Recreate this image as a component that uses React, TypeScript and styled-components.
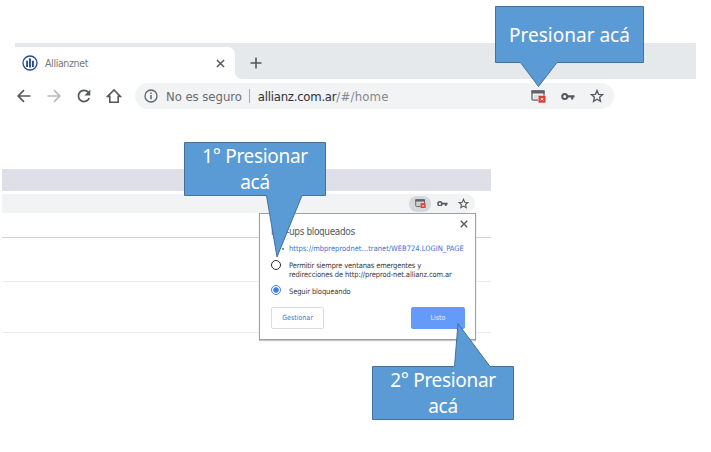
import React from "react";
import styled, { createGlobalStyle } from "styled-components";

const GlobalStyle = createGlobalStyle`
  *, *::before, *::after { box-sizing: border-box; }
  body { margin: 0; background: #fff; }
`;

const uiFont = `"DejaVu Sans Condensed", "DejaVu Sans", sans-serif`;

const Page = styled.main`
  position: relative;
  width: 711px;
  height: 452px;
  overflow: hidden;
  background: #fff;
  font-family: ${uiFont};
  font-stretch: condensed;
`;

const Browser = styled.section`
  width: 681px;
  margin-left: 15px;
  padding-top: 43px;
`;

const TabStrip = styled.div`
  display: flex;
  align-items: flex-end;
  height: 36px;
  background: #e5e9ec;
`;

const Tab = styled.div`
  display: flex;
  align-items: center;
  width: 220px;
  height: 32px;
  padding: 0 10px 0 7px;
  background: #fff;
  border-radius: 0 7px 0 0;
`;

const NewTab = styled.div`
  display: flex;
  align-items: center;
  height: 32px;
  padding-left: 15px;
  border-bottom-left-radius: 7px;
  background: #e5e9ec;
`;

const NewTabBack = styled.div`
  background: #fff;
`;

const Label = styled.span<{ $size: number; $color: string; $spacing?: number }>`
  font-size: ${(p) => p.$size}px;
  color: ${(p) => p.$color};
  letter-spacing: ${(p) => p.$spacing ?? 0}px;
  white-space: nowrap;
`;

const TabTitle = styled(Label)`
  flex: 1;
  margin-left: 7px;
`;

const Toolbar = styled.div`
  display: flex;
  align-items: center;
  height: 34px;
`;

const Nav = styled.div`
  display: flex;
  gap: 14px;
  width: 120px;
  padding-left: 1px;
`;

const AddressBar = styled.div`
  display: flex;
  align-items: center;
  width: 479px;
  height: 26px;
  padding: 0 10px 0 9px;
  border-radius: 13px;
  background: #f1f3f4;
`;

const SecurityLabel = styled(Label)`
  margin-left: 8px;
`;

const Divider = styled.span`
  width: 1px;
  height: 14px;
  margin: 0 8px 0 7px;
  background: #a5a8ab;
`;

const Url = styled.div`
  flex: 1;
  line-height: 18px;
`;

const Actions = styled.div<{ $gap: number }>`
  display: flex;
  align-items: center;
  gap: ${(p) => p.$gap}px;
`;

const SecondWindow = styled.section`
  width: 489px;
  margin: 56px 0 0 2px;
`;

const TitleBand = styled.div`
  height: 22px;
  background: #dfe0e7;
`;

const SmallBar = styled.div`
  display: flex;
  align-items: center;
  justify-content: flex-end;
  width: 473px;
  height: 19px;
  margin-top: 3px;
  padding-right: 6px;
  border-radius: 0 10px 10px 0;
  background: #f1f3f4;
`;

const ActiveBadge = styled.span`
  display: flex;
  align-items: center;
  justify-content: center;
  width: 22px;
  height: 16px;
  margin-right: -4px;
  border-radius: 8px;
  background: #d5d8da;
`;

const Row = styled.div<{ $height: number; $line: string }>`
  height: ${(p) => p.$height}px;
  border-bottom: 1px solid ${(p) => p.$line};
`;

const Dialog = styled.section`
  position: absolute;
  left: 259px;
  top: 213px;
  display: flex;
  flex-direction: column;
  width: 217px;
  height: 127px;
  padding: 7px 10px 10px 11px;
  border: 1px solid #a0a0a0;
  background: #fff;
  box-shadow: 0 1px 1px #c4c4c4;
`;

const DialogHead = styled.header`
  display: flex;
  justify-content: space-between;
  height: 21px;
  line-height: 21px;
`;

const CloseSlot = styled.span`
  display: flex;
  margin: -1px -3px 0 0;
`;

const LinkRow = styled.div`
  display: flex;
  align-items: center;
  gap: 5px;
  height: 13px;
  padding-left: 11px;
`;

const Bullet = styled.i`
  width: 2px;
  height: 2px;
  border-radius: 50%;
  background: #3974d0;
`;

const Option = styled.div<{ $height: number; $top: number }>`
  display: flex;
  height: ${(p) => p.$height}px;
  margin-top: ${(p) => p.$top}px;
`;

const Radio = styled.span<{ $on?: boolean }>`
  flex: none;
  width: 10px;
  height: 10px;
  margin-right: 8px;
  border: ${(p) => (p.$on ? "1px solid #4285e8" : "1.6px solid #2c2d30")};
  border-radius: 50%;
  background: ${(p) => (p.$on ? "radial-gradient(circle, #3b80ea 0 2.4px, #fff 3.1px)" : "#fff")};
`;

const OptionText = styled.div<{ $drop?: number }>`
  display: flex;
  flex-direction: column;
  padding-top: ${(p) => p.$drop ?? 0}px;
  line-height: 9px;
`;

const Buttons = styled.footer`
  display: flex;
  justify-content: space-between;
  margin-top: auto;
`;

const Button = styled.button<{ $primary?: boolean }>`
  width: ${(p) => (p.$primary ? 54 : 53)}px;
  height: 22px;
  padding: 0;
  border: 1px solid ${(p) => (p.$primary ? "#649bfa" : "#dadce0")};
  border-radius: 2px;
  background: ${(p) => (p.$primary ? "#649bfa" : "#fff")};
  color: ${(p) => (p.$primary ? "#e8f0ff" : "#3974d0")};
  font: 7px/18px ${uiFont};
  font-stretch: condensed;
`;

const CalloutBox = styled.div<{ $x: number; $y: number; $w: number; $h: number }>`
  position: absolute;
  left: ${(p) => p.$x}px;
  top: ${(p) => p.$y}px;
  width: ${(p) => p.$w}px;
  height: ${(p) => p.$h}px;
  display: flex;
  align-items: center;
  justify-content: center;
`;

const CalloutShape = styled.svg`
  position: absolute;
  inset: 0;
  overflow: visible;
`;

const CalloutText = styled.p<{ $spacing: number }>`
  position: relative;
  margin: 0;
  color: #fff;
  font: 19px/26px "Noto Sans", "Open Sans", sans-serif;
  letter-spacing: ${(p) => p.$spacing}px;
  text-align: center;
  white-space: pre-line;
`;

type CalloutProps = { x: number; y: number; w: number; h: number; d: string; text: string; spacing?: number };

const Callout = ({ x, y, w, h, d, text, spacing = 0 }: CalloutProps) => (
  <CalloutBox $x={x} $y={y} $w={w} $h={h}>
    <CalloutShape width={w} height={h}>
      <path d={d} fill="#5b9bd5" stroke="#41719c" strokeWidth="1" />
    </CalloutShape>
    <CalloutText $spacing={spacing}>{text}</CalloutText>
  </CalloutBox>
);

const Logo = () => (
  <svg width="16" height="16" viewBox="0 0 16 16">
    <circle cx="8" cy="8" r="7" fill="#fff" stroke="#264b92" strokeWidth="1.3" />
    <path d="M5.1 12V5.7M8 12.5V3.6M10.9 12V5.7" stroke="#264b92" strokeWidth="1.9" />
    <path d="M6.8 4.1H8" stroke="#264b92" strokeWidth="1" />
  </svg>
);

const Cross = ({ size }: { size: number }) => (
  <svg width={size} height={size} viewBox="0 0 8 8">
    <path d="M.8.8l6.4 6.4M7.2.8L.8 7.2" stroke="#55585c" strokeWidth="1.3" />
  </svg>
);

const Plus = () => (
  <svg width="12" height="12" viewBox="0 0 12 12">
    <path d="M6 .5v11M.5 6h11" stroke="#54575b" strokeWidth="1.6" />
  </svg>
);

const Arrow = ({ back }: { back?: boolean }) => (
  <svg width="16" height="16" viewBox="0 0 16 16">
    <path
      d={back ? "M14.5 8H2.5M8 2.2L2.2 8L8 13.8" : "M1.5 8h12M8 2.2L13.8 8L8 13.8"}
      fill="none"
      stroke={back ? "#55585c" : "#b8babd"}
      strokeWidth="1.7"
    />
  </svg>
);

const Reload = () => (
  <svg width="16" height="16" viewBox="0 0 16 16">
    <path d="M13.2 10A5.6 5.6 0 1 1 12.2 4.2" fill="none" stroke="#55585c" strokeWidth="1.8" />
    <path d="M14.3 1.6v6H8.4z" fill="#55585c" />
  </svg>
);

const Home = () => (
  <svg width="16" height="16" viewBox="0 0 16 16">
    <path d="M1.6 8.4L8 1.9l6.4 6.5H12.2v5.8H3.8V8.4z" fill="none" stroke="#55585c" strokeWidth="1.6" />
  </svg>
);

const Info = () => (
  <svg width="14" height="14" viewBox="0 0 14 14">
    <circle cx="7" cy="7" r="6" fill="none" stroke="#5f6368" strokeWidth="1.3" />
    <path d="M7 6v4.3M7 3.6v1.5" stroke="#5f6368" strokeWidth="1.5" />
  </svg>
);

const PopupIcon = ({ w }: { w: number }) => (
  <svg width={w} height={(w * 13) / 15} viewBox="0 0 15 13">
    <path d="M7 10.2H2.2Q1 10.2 1 9V1h12v4.5" fill="none" stroke="#5f6368" strokeWidth="1.3" />
    <path d="M.5.5h13v3H.5z" fill="#5f6368" />
    <path d="M3 6h5M3 8h3.5" stroke="#bfc2c5" strokeWidth=".8" />
    <path d="M7.5 5.7h7v7h-7z" fill="#e03c31" />
    <path d="M9.8 8l2.4 2.4M12.2 8l-2.4 2.4" stroke="#fff" strokeWidth="1" />
  </svg>
);

const KeyIcon = ({ w }: { w: number }) => (
  <svg width={w} height={w / 2} viewBox="0 0 14 7">
    <circle cx="3.7" cy="3.5" r="2.5" fill="none" stroke="#55585c" strokeWidth="2" />
    <path d="M6.5 3.4h7M11.2 3.5v3" stroke="#55585c" strokeWidth="2.1" />
  </svg>
);

const StarIcon = ({ w }: { w: number }) => (
  <svg width={w} height={w} viewBox="0 0 14 14">
    <path
      d="M7 1.5l1.6 3.8 4.1.3-3.1 2.7.9 4L7 10.2l-3.5 2.1.9-4L1.3 5.6l4.1-.3z"
      fill="none"
      stroke="#55585c"
      strokeWidth="1.3"
    />
  </svg>
);

export default function App() {
  return (
    <>
      <GlobalStyle />
      <Page>
        <Browser>
          <TabStrip>
            <Tab>
              <Logo />
              <TabTitle $size={10.5} $color="#75787c" $spacing={-0.35}>Allianznet</TabTitle>
              <Cross size={9} />
            </Tab>
            <NewTabBack>
              <NewTab><Plus /></NewTab>
            </NewTabBack>
          </TabStrip>
          <Toolbar>
            <Nav>
              <Arrow back />
              <Arrow />
              <Reload />
              <Home />
            </Nav>
            <AddressBar>
              <Info />
              <SecurityLabel $size={13} $color="#696c70" $spacing={-0.05}>No es seguro</SecurityLabel>
              <Divider />
              <Url>
                <Label $size={13} $color="#303236" $spacing={-0.25}>allianz.com.ar</Label>
                <Label $size={13} $color="#85898d" $spacing={0.2}>/#/home</Label>
              </Url>
              <Actions $gap={15}>
                <PopupIcon w={15} />
                <KeyIcon w={14} />
                <StarIcon w={14} />
              </Actions>
            </AddressBar>
          </Toolbar>
        </Browser>

        <SecondWindow>
          <TitleBand />
          <SmallBar>
            <Actions $gap={10}>
              <ActiveBadge><PopupIcon w={11} /></ActiveBadge>
              <KeyIcon w={11} />
              <StarIcon w={11} />
            </Actions>
          </SmallBar>
          <Row $height={25} $line="#d3d3d3" />
          <Row $height={44} $line="#ececec" />
          <Row $height={51} $line="#ececec" />
        </SecondWindow>

        <Dialog>
          <DialogHead>
            <Label $size={10} $color="#55585c" $spacing={-0.38}>Pop-ups bloqueados</Label>
            <CloseSlot><Cross size={8} /></CloseSlot>
          </DialogHead>
          <LinkRow>
            <Bullet />
            <Label $size={7.5} $color="#3974d0">https://mbpreprodnet…tranet/WEB724.LOGIN_PAGE</Label>
          </LinkRow>
          <Option $height={19} $top={5}>
            <Radio />
            <OptionText $drop={1}>
              <Label $size={7.5} $color="#34363a" $spacing={-0.15}>Permitir siempre ventanas emergentes y</Label>
              <Label $size={7.5} $color="#34363a" $spacing={-0.1}>redirecciones de http://preprod-net.allianz.com.ar</Label>
            </OptionText>
          </Option>
          <Option $height={11} $top={6}>
            <Radio $on />
            <OptionText $drop={2}>
              <Label $size={7.5} $color="#34363a" $spacing={-0.12}>Seguir bloqueando</Label>
            </OptionText>
          </Option>
          <Buttons>
            <Button>Gestionar</Button>
            <Button $primary>Listo</Button>
          </Buttons>
        </Dialog>

        <Callout x={495} y={6} w={149} h={57} text="Presionar acá" d="M.5.5H148.5V56.5H62L43.5 80.5L25.5 56.5H.5Z" />
        <Callout x={184} y={142} w={142} h={54} spacing={-0.32} text={"1° Presionar\nacá"} d="M.5.5H141.5V53.5H118L93 115L82.5 53.5H.5Z" />
        <Callout x={372} y={366} w={142} h={54} spacing={-0.32} text={"2° Presionar\nacá"} d="M.5.5H82.5L86-42.5L118 .5H141.5V53.5H.5Z" />
      </Page>
    </>
  );
}
